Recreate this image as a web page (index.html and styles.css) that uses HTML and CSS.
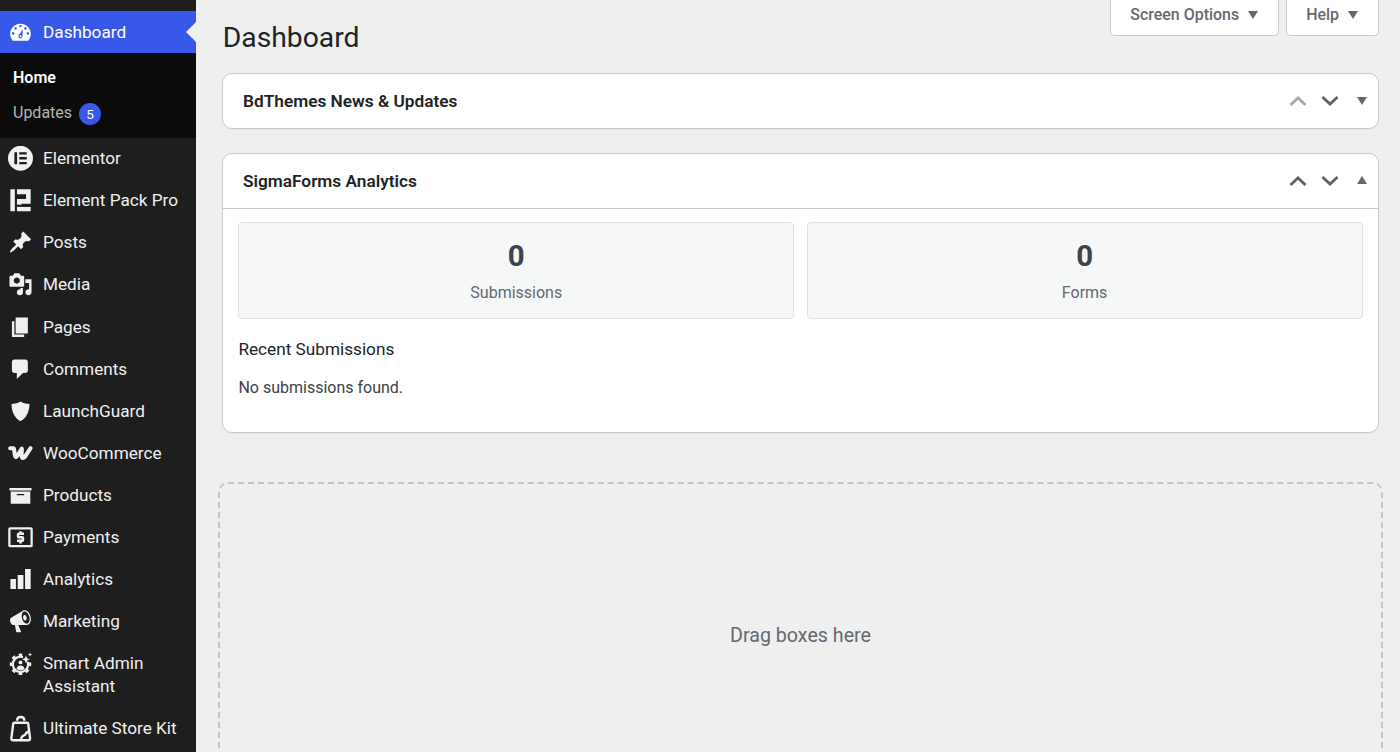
FILE: index.html
```html
<!DOCTYPE html>
<html lang="en">
<head>
<meta charset="utf-8">
<title>Dashboard</title>
<link rel="stylesheet" href="styles.css">
</head>
<body>
<nav class="sidebar">
  <a class="item current"><svg class="icon" viewBox="0 0 20 20"><path fill-rule="evenodd" d="M3.76 17h12.48c1.34-1.53 2.17-3.53 2.17-5.700 0-4.640-3.760-8.300-8.410-8.300s-8.410 3.660-8.410 8.300c0 2.170.830 4.170 2.170 5.700zM10 4c.55 0 1 .45 1 1s-.45 1-1 1-1-.45-1-1 .45-1 1-1zM6 6c.55 0 1 .45 1 1s-.45 1-1 1-1-.45-1-1 .45-1 1-1zm8 0c.55 0 1 .45 1 1s-.45 1-1 1-1-.45-1-1 .45-1 1-1zM12 7.500L11.600 13.200C11.600 14.300 10.900 15 10 15S8.200 14.300 8.200 13.300C8.200 12.700 8.500 12.100 9 11.800zM4 10c.55 0 1 .45 1 1s-.45 1-1 1-1-.45-1-1 .45-1 1-1zm12 0c.55 0 1 .45 1 1s-.45 1-1 1-1-.45-1-1 .45-1 1-1zm-5.200 3.200c0-.5-.4-.8-.8-.8s-.8.3-.8.8.4.8.8.8.8-.3.8-.8z"/></svg><span>Dashboard</span></a>
  <div class="submenu">
    <a class="sub active">Home</a>
    <a class="sub">Updates <span class="badge">5</span></a>
  </div>
  <a class="item"><svg class="icon" viewBox="0 0 20 20"><path fill-rule="evenodd" d="M10-.2a10.200 10.200 0 1 0 0 20.400 10.200 10.200 0 0 0 0-20.400zM5 5.100h2.200v9.800H5zM9 5.100h6.100v1.900H9zM9 9.050h6.100v1.900H9zM9 13h6.100v1.900H9z"/></svg><span>Elementor</span></a>
  <a class="item"><svg class="icon" viewBox="0 0 20 20"><path d="M1.700 1H5.400V19H1.700zM7.100 1H18.300V12.900H10.900V15.400H18.300V19H7.100V8.900H14.500V5H7.100z"/><path class="cut" d="M7.100 13.600H18.300V15.400H7.100z"/></svg><span>Element Pack Pro</span></a>
  <a class="item"><svg class="icon" viewBox="0 0 20 20"><path d="M10.440 3.020l1.820-1.820 6.360 6.350-1.830 1.820c-1.050-.68-2.480-.57-3.410.36l-.75.75c-.92.93-1.040 2.350-.35 3.410l-1.830 1.820-2.410-2.410-2.800 2.790c-.42.42-3.380 2.710-3.800 2.290s1.860-3.390 2.280-3.810l2.790-2.790L4.100 9.360l1.830-1.820c1.050.69 2.480.57 3.400-.36l.75-.75c.93-.92 1.050-2.350.36-3.410z"/></svg><span>Posts</span></a>
  <a class="item"><svg class="icon" viewBox="0 0 20 20"><path fill-rule="evenodd" d="M13 11V4c0-.55-.45-1-1-1h-1.670L9 1H5L3.670 3H2c-.55 0-1 .45-1 1v7c0 .55.45 1 1 1h10c.55 0 1-.45 1-1zM7 4.500c1.380 0 2.500 1.120 2.500 2.500S8.380 9.500 7 9.500 4.500 8.380 4.500 7 5.620 4.500 7 4.500zM14 6h5v10.500c0 1.380-1.120 2.500-2.500 2.500S14 17.880 14 16.500s1.120-2.500 2.500-2.500c.17 0 .34.02.5.05V9h-3V6zm-4 8.050V13h2v3.500c0 1.380-1.120 2.500-2.500 2.500S7 17.880 7 16.500 8.120 14 9.500 14c.17 0 .34.02.5.05z"/></svg><span>Media</span></a>
  <a class="item"><svg class="icon" viewBox="0 0 20 20"><path d="M6 15V2h10v13H6zm-1 1h8v2H3V5h2v11z"/></svg><span>Pages</span></a>
  <a class="item"><svg class="icon" viewBox="0 0 20 20"><path d="M5 2h9c1.100 0 2 .9 2 2v7c0 1.100-.9 2-2 2h-2l-5 5v-5H5c-1.100 0-2-.9-2-2V4c0-1.100.9-2 2-2z"/></svg><span>Comments</span></a>
  <a class="item"><svg class="icon" viewBox="0 0 20 20"><path d="M10 2s3 2 7.300 2c0 11-7.300 14-7.300 14S2.700 15 2.700 4C7 4 10 2 10 2z"/></svg><span>LaunchGuard</span></a>
  <a class="item"><svg class="icon wide" viewBox="0 0 24 24"><path class="woo" d="M1.900 7.100H4.700Q5.600 7.100 5.800 8.600L6.500 14Q7 17.200 8.900 14.600L13.300 7.500L13.100 14Q13.200 17.600 15.400 16.200Q16.300 15.600 17.400 13.800L21.800 7.100"/></svg><span>WooCommerce</span></a>
  <a class="item"><svg class="icon" viewBox="0 0 20 20"><path fill-rule="evenodd" d="M19 4v2.200H1V4h18zM2 7h16v10H2V7zm11 3V9H7v1h6z"/></svg><span>Products</span></a>
  <a class="item"><svg class="icon wide" viewBox="0 0 24 24"><rect class="line" x="1.100" y="3.200" width="21.800" height="17.600" rx=".8"/><path class="dollar" d="M15.400 8.500H10.200Q9.600 8.500 9.600 9.200V11.300Q9.600 12 10.300 12H13.700Q14.400 12 14.400 12.700V14.800Q14.400 15.500 13.700 15.500H8.600M12 6V8.500M12 15.500V18"/></svg><span>Payments</span></a>
  <a class="item"><svg class="icon" viewBox="0 0 20 20"><path d="M18.300 18V1.600H13.700V18zM12.400 18V6.500H7.700V18zM6.300 18V9.700H1.800V18z"/></svg><span>Analytics</span></a>
  <a class="item"><svg class="icon" viewBox="0 0 20 20"><path fill-rule="evenodd" d="M18.150 5.940c.46 1.620.38 3.220-.02 4.480-.42 1.280-1.260 2.180-2.300 2.480-.16.06-.26.06-.4.06-.06.02-.12.02-.18.02-.06.02-.14.02-.22.02h-6.800l2.220 5.500c.02.14-.06.26-.14.34-.08.1-.24.16-.34.16H6.950c-.1 0-.26-.06-.34-.16-.08-.08-.16-.2-.14-.34l-1-5.500H4.250l-.02-.02c-.5.06-1.080-.18-1.540-.62s-.88-1.080-1.060-1.880c-.24-.8-.2-1.560-.02-2.200.18-.62.58-1.080 1.060-1.300l.02-.02 9-5.400c.1-.06.18-.1.24-.16.06-.04.14-.08.24-.12.16-.08.28-.12.5-.18 1.040-.3 2.240.1 3.220.98s1.840 2.240 2.260 3.860zm-2.580 5.980h-.02c.4-.1.74-.34 1.040-.7.58-.7.86-1.760.86-3.040 0-.64-.1-1.300-.28-1.980-.34-1.360-1.020-2.500-1.780-3.240s-1.680-1.100-2.460-.88c-.82.22-1.400.96-1.700 2-.32 1.040-.28 2.360.06 3.720.38 1.360 1 2.500 1.800 3.240.78.74 1.620 1.100 2.480.88zm-2.540-7.080c.22-.04.42-.02.62.04.38.16.76.48 1.020 1s.42 1.200.42 1.780c0 .3-.04.56-.12.8-.18.48-.44.84-.86.94-.34.1-.8-.06-1.140-.4s-.64-.86-.78-1.500c-.18-.62-.12-1.240.02-1.720s.48-.84.82-.94z"/></svg><span>Marketing</span></a>
  <a class="item"><svg class="icon wide" viewBox="0 0 24 24"><circle class="gear-teeth" cx="12" cy="13" r="9.200" pathLength="64"/><circle class="gear-ring" cx="12" cy="13" r="7.500"/><path class="cut" d="M14.500 1h9v9.500h-4l-5-2z"/><circle cx="12" cy="11.200" r="1.900"/><path d="M8.100 17.600Q8.700 14.200 12 14.200T15.900 17.600Q12 20 8.100 17.600z"/><path d="M17.300 4.500l1.100 2.600 2.600 1.100-2.600 1.100-1.100 2.600-1.100-2.600-2.600-1.100 2.600-1.100zM21.300 1.500l.6 1.400 1.400.6-1.400.6-.6 1.400-.6-1.400-1.400-.6 1.400-.6z"/></svg><span>Smart Admin Assistant</span></a>
  <a class="item"><svg class="icon wide tall" viewBox="0 0 24 26"><path class="bag" d="M6 7.500H18.400Q19.300 7.500 19.400 8.400L21.200 22.200Q21.400 24.300 19.500 24.300H4.900Q3 24.300 3.200 22.200L5 8.400Q5.100 7.500 6 7.500zM8.700 5.600V5.100Q8.900 1.900 12.200 1.900T15.700 5.100V5.600M12.300 24.200C13 18.500 16 20.500 16.800 18.500C17.500 16.500 18.500 16.300 20.200 16.100"/></svg><span>Ultimate Store Kit</span></a>
</nav>
<main class="content">
  <header class="top">
    <h1>Dashboard</h1>
    <div class="tabs">
      <button class="tab">Screen Options<svg class="tri" viewBox="0 0 10 8"><path d="M0 0h10L5 8z"/></svg></button>
      <button class="tab">Help<svg class="tri" viewBox="0 0 10 8"><path d="M0 0h10L5 8z"/></svg></button>
    </div>
  </header>
  <section class="box">
    <div class="box-head"><h2>BdThemes News &amp; Updates</h2>
      <div class="controls"><svg class="chev off" viewBox="0 0 18 12"><path d="M1.500 10L9 3l7.500 7"/></svg><svg class="chev" viewBox="0 0 18 12"><path d="M1.500 2L9 9l7.500-7"/></svg><svg class="tri toggle" viewBox="0 0 10 8"><path d="M0 0h10L5 8z"/></svg></div>
    </div>
  </section>
  <section class="box">
    <div class="box-head"><h2>SigmaForms Analytics</h2>
      <div class="controls"><svg class="chev" viewBox="0 0 18 12"><path d="M1.500 10L9 3l7.500 7"/></svg><svg class="chev" viewBox="0 0 18 12"><path d="M1.500 2L9 9l7.500-7"/></svg><svg class="tri toggle up" viewBox="0 0 10 8"><path d="M0 8h10L5 0z"/></svg></div>
    </div>
    <div class="box-body">
      <div class="stats">
        <div class="stat"><strong>0</strong><span>Submissions</span></div>
        <div class="stat"><strong>0</strong><span>Forms</span></div>
      </div>
      <h3>Recent Submissions</h3>
      <p>No submissions found.</p>
    </div>
  </section>
  <div class="dropzone">Drag boxes here</div>
</main>
</body>
</html>
```

FILE: styles.css
```css
* { box-sizing: border-box; }
body {
  margin: 0;
  height: 752px;
  overflow: hidden;
  display: flex;
  background: #efefef;
  color: #3c434a;
  font-family: Roboto, "Liberation Sans", sans-serif;
  font-size: 16px;
}
h1, h2, h3, p { margin: 0; }

.sidebar {
  width: 196px;
  flex: none;
  padding-top: 11px;
  background: #1e1e1e;
  color: #f0f0f1;
}
.item {
  position: relative;
  display: flex;
  align-items: flex-start;
  gap: 10px;
  padding: 9.550px 10px 9.550px 8px;
  font-size: 17.200px;
  line-height: 23px;
}
.item.current { background: #3858e9; color: #fff; }
.item.current::after {
  content: "";
  position: absolute;
  right: 0;
  top: 11px;
  border: 10px solid transparent;
  border-left: 0;
  border-right-color: #efefef;
}
.icon {
  width: 25px;
  height: 24.500px;
  flex: none;
  margin: -1px 0 -.5px;
  fill: currentColor;
}
.tall { height: 27px; margin: -2px 0 -2px; }
.cut { fill: #1e1e1e; }
.woo { fill: none; stroke: currentColor; stroke-width: 4; stroke-linecap: round; stroke-linejoin: round; }
.line { fill: none; stroke: currentColor; stroke-width: 2.200; }
.dollar { fill: none; stroke: currentColor; stroke-width: 2.500; }
.gear-teeth { fill: none; stroke: currentColor; stroke-width: 2.600; stroke-dasharray: 4 4; stroke-dashoffset: 2; }
.gear-ring { fill: none; stroke: currentColor; stroke-width: 2.200; }
.bag { fill: none; stroke: currentColor; stroke-width: 2.300; stroke-linejoin: round; }

.submenu {
  height: 84.500px;
  padding: 7px 13px 0;
  background: #0b0b0b;
}
.sub {
  display: flex;
  align-items: center;
  gap: 7px;
  height: 35px;
  font-size: 16px;
  color: #b4b4b5;
}
.sub.active { color: #fff; font-weight: 600; }
.badge {
  width: 22px;
  height: 22px;
  margin-top: 2px;
  border-radius: 50%;
  background: #3858e9;
  color: #fff;
  font-size: 13.500px;
  line-height: 22px;
  text-align: center;
}

.content {
  flex: 1;
  display: flex;
  flex-direction: column;
  padding: 0 21.500px 0 26.400px;
}
.top {
  flex: none;
  display: flex;
  justify-content: space-between;
  height: 73.400px;
}
h1 {
  padding: 20px 0 0 .3px;
  font-size: 28.300px;
  line-height: 36px;
  font-weight: 400;
  color: #1d2327;
}
.tabs { display: flex; gap: 7px; }
.tab {
  display: flex;
  align-items: center;
  gap: 8.500px;
  height: 36.400px;
  padding: 0 20px 6.500px 19.500px;
  border: 1px solid #c9cacc;
  border-top: 0;
  border-radius: 0 0 5px 5px;
  background: #fff;
  color: #646970;
  font: 500 15.950px Roboto, "Liberation Sans", sans-serif;
}
.tri { width: 10px; height: 8px; fill: #646970; }
.tab .tri { margin-top: 2px; }

.box {
  flex: none;
  margin-bottom: 24px;
  border: 1px solid #c9cacc;
  border-radius: 10px;
  background: #fff;
  box-shadow: 0 1px 1px rgba(0, 0, 0, .04);
}
.box-head {
  display: flex;
  align-items: center;
  justify-content: space-between;
  height: 54px;
  padding: 0 11px 0 19.600px;
}
h2 {
  font-size: 17.250px;
  line-height: 24px;
  font-weight: 600;
  color: #1d2327;
}
.controls { display: flex; align-items: center; gap: 14px; }
.chev { width: 18px; height: 12px; fill: none; stroke: #5d636a; stroke-width: 2.800; }
.chev.off { stroke: #a7aaad; }
.toggle { margin-left: 4px; }
.toggle.up { margin-top: -2px; }
.box-body {
  height: 224px;
  padding: 13px 15px;
  border-top: 1px solid #c9cacc;
}
.stats { display: grid; grid-template-columns: 1fr 1fr; gap: 12.500px; }
.stat {
  display: flex;
  flex-direction: column;
  align-items: center;
  height: 97px;
  padding-top: 14px;
  border: 1px solid #dfe0e2;
  border-radius: 4px;
  background: #f6f7f7;
}
.stat strong { font-size: 29.400px; line-height: 38px; color: #3c434a; }
.stat span { margin-top: 7px; line-height: 22px; color: #646970; }
h3 {
  margin-top: 17.500px;
  font-size: 17.200px;
  line-height: 24px;
  font-weight: 400;
  color: #1d2327;
}
.box-body p { margin-top: 16px; line-height: 22px; }
.dropzone {
  flex: none;
  height: 306px;
  margin: 25px -4.500px 0 -4.400px;
  border: 2px dashed #c3c4c7;
  border-radius: 10px;
  font-size: 19.650px;
  line-height: 303px;
  text-align: center;
  color: #646970;
}
```
